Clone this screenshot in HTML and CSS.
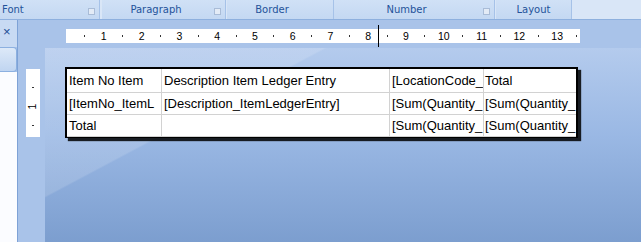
FILE: index.html
```html
<!DOCTYPE html>
<html lang="en">
<head>
    <meta charset="UTF-8">
    <title>Report Layout</title>
    <link rel="stylesheet" href="styles.css">
</head>
<body>
    <div class="ribbon">
        <div class="group g-font"><span class="label">Font</span><i class="launcher"></i></div>
        <div class="group g-para"><span class="label">Paragraph</span><i class="launcher"></i></div>
        <div class="group g-border"><span class="label">Border</span></div>
        <div class="group g-number"><span class="label">Number</span><i class="launcher"></i></div>
        <div class="group g-layout"><span class="label">Layout</span></div>
    </div>

    <div class="main">
        <div class="pane">
            <div class="pane-head"><span class="close">&times;</span></div>
            <div class="pane-tab"></div>
            <div class="pane-body"></div>
        </div>

        <div class="work">
            <div class="hband">
                <div class="hruler" id="hruler"></div>
                <div class="marker"></div>
            </div>
            <div class="lower">
                <div class="vcol">
                    <div class="vruler">
                        <span class="vtick"></span>
                        <span class="vnum">1</span>
                        <span class="vtick"></span>
                    </div>
                </div>
                <div class="canvas">
                    <!-- cell texts as the designer shows them, cut at the column edge -->
                    <div class="report">
                        <div class="cell">Item No Item</div>
                        <div class="cell">Description Item Ledger Entry</div>
                        <div class="cell">[LocationCode_</div>
                        <div class="cell last">Total</div>

                        <div class="cell">[ItemNo_ItemL</div>
                        <div class="cell">[Description_ItemLedgerEntry]</div>
                        <div class="cell">[Sum(Quantity_</div>
                        <div class="cell last">[Sum(Quantity_</div>

                        <div class="cell">Total</div>
                        <div class="cell"></div>
                        <div class="cell">[Sum(Quantity_</div>
                        <div class="cell last">[Sum(Quantity_</div>
                    </div>
                </div>
            </div>
        </div>
    </div>

    <script>
    // build the centimetre ruler: a dot every half cm, a number every cm
    const ruler = document.getElementById('hruler');
    for (let i = 1; i <= 27; i++) {
        const cell = document.createElement('span');
        cell.className = 'rcell';
        if (i % 2 === 0) {
            cell.textContent = i / 2;
        } else {
            const dot = document.createElement('i');
            dot.className = 'tick';
            cell.appendChild(dot);
        }
        ruler.appendChild(cell);
    }
    </script>
</body>
</html>
```

FILE: styles.css
```css
body {
    margin: 0;
    width: 641px;
    height: 242px;
    overflow: hidden;
    font-family: "Liberation Sans", Arial, sans-serif;
    background: #a9c3e9;
}

/* ribbon group captions */
.ribbon {
    display: flex;
    height: 19px;
    border-bottom: 1px solid #8eb0de;
    background: #d9e6f7;
}
.group {
    box-sizing: border-box;
    display: flex;
    align-items: center;
    height: 19px;
    background: linear-gradient(#d0e1f6, #c4d8f2);
    border-right: 1px solid #a6c2e8;
    font-family: "DejaVu Sans", sans-serif;
    font-size: 10px;
    color: #24539a;
}
.label {
    flex: 1;
    text-align: center;
    padding-right: 4px;
}
.launcher {
    width: 5px;
    height: 5px;
    border: 1px solid #a9bcd7;
    background: #e3ebf6;
    margin: 4px 4px 0 0;
}
.g-font { width: 100px; margin-right: 2px; }
.g-font .label { text-align: left; padding-left: 2px; }
.g-para { width: 124px; margin-right: 1px; }
.g-border { width: 107px; }
.g-border .label { padding-right: 16px; }
.g-number { width: 161px; margin-right: 1px; }
.g-layout { width: 76px; }
.g-layout .label { padding-right: 0; }

.main {
    display: flex;
    height: 222px;
}

/* left task pane */
.pane {
    width: 17px;
    display: flex;
    flex-direction: column;
}
.pane-head {
    height: 27px;
    background: #c8daf3;
}
.close {
    display: block;
    margin: 5px 0 0 3px;
    font-size: 13px;
    line-height: 13px;
    color: #1d4d93;
}
.pane-tab {
    box-sizing: border-box;
    height: 25px;
    background: linear-gradient(#dde9f8, #c0d5f1);
    border: 1px solid #8cb0e0;
    border-left: none;
    border-radius: 0 4px 4px 0;
}
.pane-body {
    flex: 1;
    background: #fbfcff;
}

/* design surface */
.work {
    flex: 1;
    display: flex;
    flex-direction: column;
    border-left: 1px solid #7ea2d6;
}
.hband {
    position: relative;
    height: 28px;
    background: #a9c3e9;
}
.hruler {
    display: flex;
    width: 514px;
    height: 14px;
    margin: 9px 0 0 48px;
    padding-left: 9.45px;
    box-sizing: border-box;
    overflow: hidden;
    background: #fff;
}
.rcell {
    flex: 0 0 18.9px;
    display: flex;
    justify-content: center;
    align-items: center;
    font-size: 10.5px;
    color: #000;
}
.tick {
    width: 1px;
    height: 2px;
    background: #333;
}
.marker {
    position: absolute;
    left: 360px;
    top: 5px;
    width: 1px;
    height: 22px;
    background: #000;
}

.lower {
    flex: 1;
    display: flex;
}
.vcol {
    width: 27px;
    background: #a9c3e9;
}
.vruler {
    width: 14px;
    height: 68px;
    margin: 21px 0 0 8px;
    background: #fff;
    display: flex;
    flex-direction: column;
    align-items: center;
    padding-top: 18px;
    box-sizing: border-box;
}
.vtick {
    width: 2px;
    height: 1px;
    background: #333;
}
.vnum {
    display: block;
    height: 37px;
    line-height: 37px;
    font-size: 10.5px;
    transform: rotate(-90deg);
}

.canvas {
    flex: 1;
    background:
        linear-gradient(152deg, rgba(255, 255, 255, 0.14) 0, rgba(255, 255, 255, 0.14) 29%, rgba(255, 255, 255, 0) 29.4%),
        linear-gradient(#b4cbed, #9ab8e4 45%, #7c9ecf);
}

/* report table */
.report {
    display: grid;
    grid-template-columns: 95px 228px 94px 92px;
    grid-template-rows: 24px 22px 22px;
    width: max-content;
    margin: 19px 0 0 20px;
    border: 2px solid #000;
    border-bottom-width: 1px;
    background: #fff;
    box-shadow: 3px 3px 1px rgba(0, 0, 0, 0.85);
    font-size: 13px;
    color: #000;
}
.cell {
    box-sizing: border-box;
    display: flex;
    align-items: center;
    padding-left: 2px;
    overflow: hidden;
    white-space: nowrap;
    border-right: 1px solid #d2d2d2;
    border-bottom: 1px solid #d2d2d2;
}
.cell.last {
    border-right: none;
    padding-left: 1px;
}
```
